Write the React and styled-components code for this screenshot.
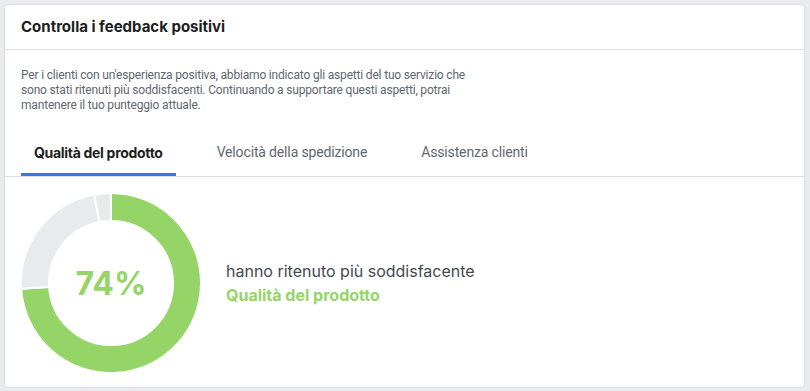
import React from "react"
import styled, { createGlobalStyle } from "styled-components"

const GlobalStyle = createGlobalStyle`
  html, body {
    margin: 0;
    padding: 0;
    background: #e9ebee;
  }
  body {
    font-family: Inter, "Liberation Sans", Arial, sans-serif;
    -webkit-font-smoothing: antialiased;
  }
`;

const Page = styled.div`
  padding: 4px 5px 4px 4px;
`;

const Card = styled.div`
  background: #fff;
  border: 1px solid #dadde1;
  border-radius: 4px;
  overflow: hidden;
`;

const Header = styled.div`
  padding: 12px 16px;
  border-bottom: 1px solid #dadde1;
`;

const Title = styled.h2`
  margin: 0;
  font-size: 15px;
  line-height: 20px;
  font-weight: 700;
  color: #1c1e21;
`;

const Intro = styled.div`
  padding: 18px 16px 0 16px;
`;

const Description = styled.p`
  margin: 0;
  max-width: 470px;
  font-family: Roboto, "Liberation Sans", Arial, sans-serif;
  font-size: 12px;
  letter-spacing: -0.18px;
  line-height: 15px;
  color: #606770;
`;

const Tabs = styled.div`
  display: flex;
  gap: 28px;
  margin-top: 15px;
  padding: 0 16px;
  border-bottom: 1px solid #dadde1;
`;

const Tab = styled.div`
  height: 48px;
  padding: 3px 13px 0 13px;
  box-sizing: border-box;
  display: flex;
  align-items: center;
  font-family: ${p => (p.$active ? "Inter" : "Roboto")}, "Liberation Sans", Arial, sans-serif;
  font-size: 14px;
  letter-spacing: ${p => (p.$active ? "-0.3px" : "-0.15px")};
  font-weight: ${p => (p.$active ? 700 : 400)};
  color: ${p => (p.$active ? "#1c1e21" : "#606770")};
  border-bottom: 3px solid ${p => (p.$active ? "#3578e5" : "transparent")};
`;

const Body = styled.div`
  display: flex;
  align-items: center;
  gap: 25px;
  padding: 16px 16px 14px 16px;
`;

const DonutWrap = styled.div`
  position: relative;
  width: 180px;
  height: 180px;
  flex-shrink: 0;
`;

const Percent = styled.div`
  position: absolute;
  inset: 0;
  display: flex;
  align-items: center;
  justify-content: center;
  font-size: 32px;
  font-weight: 700;
  color: #95d567;
  padding-top: 1px;
`;

const Summary = styled.div`
  display: flex;
  flex-direction: column;
`;

const SummaryText = styled.div`
  font-size: 16px;
  line-height: 24px;
  color: #444950;
`;

const SummaryHighlight = styled.div`
  font-size: 16px;
  line-height: 24px;
  font-weight: 700;
  color: #95d567;
`;

const segments = [
  { value: 74, color: "#95d567" },
  { value: 23, color: "#e9eaed" },
  { value: 3, color: "#e9eaed" },
];

function arcPath(cx, cy, r0, r1, a0, a1) {
  const pt = (r, a) => [cx + r * Math.sin(a), cy - r * Math.cos(a)];
  const large = a1 - a0 > Math.PI ? 1 : 0;
  const [x0, y0] = pt(r1, a0);
  const [x1, y1] = pt(r1, a1);
  const [x2, y2] = pt(r0, a1);
  const [x3, y3] = pt(r0, a0);
  return `M${x0} ${y0} A${r1} ${r1} 0 ${large} 1 ${x1} ${y1} L${x2} ${y2} A${r0} ${r0} 0 ${large} 0 ${x3} ${y3} Z`;
}

const Donut = () => {
  const total = segments.reduce((s, x) => s + x.value, 0);
  let start = 0;
  return (
    <svg width="180" height="180" viewBox="0 0 180 180">
      {segments.map((s, i) => {
        const a0 = (start / total) * Math.PI * 2;
        start += s.value;
        const a1 = (start / total) * Math.PI * 2;
        return (
          <path
            key={i}
            d={arcPath(90, 90, 62, 90, a0, a1)}
            fill={s.color}
            stroke="#fff"
            strokeWidth="2"
          />
        );
      })}
    </svg>
  );
};

export default function App() {
  return (
    <Page>
      <GlobalStyle />
      <Card>
        <Header>
          <Title>Controlla i feedback positivi</Title>
        </Header>
        <Intro>
          <Description>
            Per i clienti con un'esperienza positiva, abbiamo indicato gli aspetti del tuo servizio che
            sono stati ritenuti più soddisfacenti. Continuando a supportare questi aspetti, potrai
            mantenere il tuo punteggio attuale.
          </Description>
        </Intro>
        <Tabs>
          <Tab $active>Qualità del prodotto</Tab>
          <Tab>Velocità della spedizione</Tab>
          <Tab>Assistenza clienti</Tab>
        </Tabs>
        <Body>
          <DonutWrap>
            <Donut />
            <Percent>74%</Percent>
          </DonutWrap>
          <Summary>
            <SummaryText>hanno ritenuto più soddisfacente</SummaryText>
            <SummaryHighlight>Qualità del prodotto</SummaryHighlight>
          </Summary>
        </Body>
      </Card>
    </Page>
  );
}
